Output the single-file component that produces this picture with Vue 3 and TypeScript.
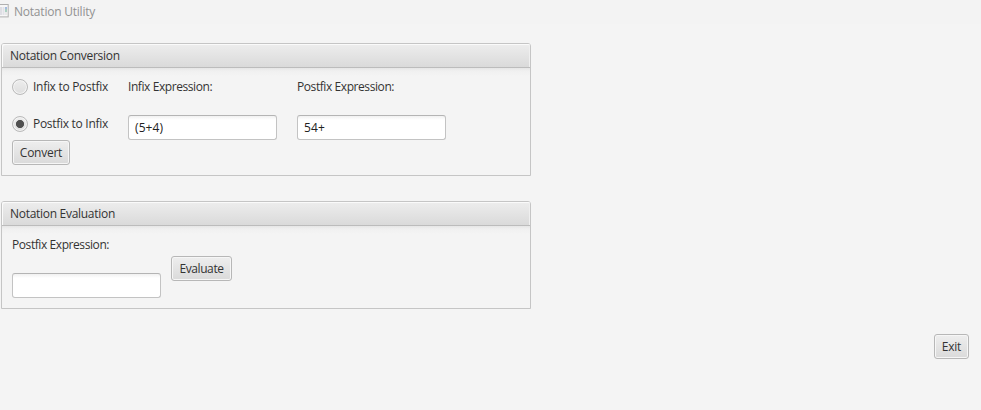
<script setup lang="ts">
import { ref } from 'vue'

type Mode = 'toPostfix' | 'toInfix'

const mode = ref<Mode>('toInfix')
const infix = ref<string>('(5+4)')
const postfix = ref<string>('54+')
const evaluation = ref<string>('')
</script>

<template>
  <div class="window">
    <header class="titlebar">
      <svg class="app-icon" width="9" height="14" viewBox="0 0 9 14">
        <rect x="-4" y="0.5" width="12.2" height="12.4" fill="#f7f7f7" stroke="#b0b0b0" />
        <rect x="0" y="3" width="2" height="8" fill="#dedee4" />
        <rect x="2.5" y="3" width="2" height="8" fill="#e2e2e8" />
        <rect x="5" y="3" width="2" height="2" fill="#a3bbe0" />
        <rect x="5" y="5" width="2" height="3" fill="#a9cfc0" />
        <rect x="5" y="8" width="2" height="3" fill="#e8e8e8" />
      </svg>
      <span class="title">Notation Utility</span>
    </header>

    <section class="panel conversion">
      <h2 class="panel-title"><span>Notation Conversion</span></h2>
      <div class="panel-body">
        <div class="modes">
          <label class="option"><input v-model="mode" type="radio" value="toPostfix" /><span>Infix to Postfix</span></label>
          <label class="option"><input v-model="mode" type="radio" value="toInfix" /><span>Postfix to Infix</span></label>
          <button type="button" class="btn convert"><span>Convert</span></button>
        </div>
        <label class="field">
          <span>Infix Expression:</span>
          <input v-model="infix" type="text" />
        </label>
        <label class="field">
          <span>Postfix Expression:</span>
          <input v-model="postfix" type="text" />
        </label>
      </div>
    </section>

    <section class="panel evaluation">
      <h2 class="panel-title"><span>Notation Evaluation</span></h2>
      <div class="panel-body">
        <label class="field">
          <span>Postfix Expression:</span>
          <input v-model="evaluation" type="text" />
        </label>
        <button type="button" class="btn evaluate"><span>Evaluate</span></button>
      </div>
    </section>

    <footer class="actions">
      <button type="button" class="btn exit"><span>Exit</span></button>
    </footer>
  </div>
</template>

<style>
body {
  background: #f4f4f4;
}
</style>

<style scoped>
.window,
.window * {
  box-sizing: border-box;
}
.window {
  width: 981px;
  height: 410px;
  overflow: hidden;
  background: #f4f4f4;
  color: #333;
  font: 12px/16px "Segoe UI", "Open Sans", "Noto Sans", sans-serif;
  letter-spacing: -0.29px;
  white-space: nowrap;
}
.titlebar {
  display: flex;
  align-items: flex-start;
  height: 24px;
  padding-top: 4px;
  background: #f3f3f3;
  color: #929292;
  letter-spacing: -0.22px;
}
.app-icon {
  display: block;
  margin-right: 5px;
}
.panel {
  width: 530px;
  margin-left: 1px;
  border: 1px solid #c5c5c5;
  border-radius: 3px 3px 0 0;
}
.conversion {
  height: 133px;
  margin-top: 19px;
}
.evaluation {
  height: 108px;
  margin-top: 25px;
}
.panel-title {
  height: 24px;
  margin: 0;
  padding: 4px 8px 0;
  border-bottom: 1px solid #bcbcbc;
  border-radius: 2px 2px 0 0;
  background: linear-gradient(#ededed, #dadada);
  box-shadow: inset 1px 1px 0 #fafafa, inset -1px 0 0 #efefef;
  font: inherit;
}
.panel-body {
  display: flex;
  height: calc(100% - 24px);
  padding: 11px 10px 0;
  background: linear-gradient(#e6e6e6, #f0f0f0 3px, #f4f4f4 8px);
}
.modes {
  display: flex;
  flex-direction: column;
  align-items: flex-start;
  width: 116px;
}
.option {
  display: flex;
  height: 16px;
  align-items: center;
  gap: 5px;
}
.option + .option {
  margin-top: 21px;
}
.option input {
  appearance: none;
  width: 16px;
  height: 16px;
  margin: 0;
  border: 1px solid #bababa;
  border-radius: 50%;
  background: linear-gradient(#ededed, #dedede);
  box-shadow: inset 0 0 0 1px #f5f5f5;
}
.option input:checked {
  background: radial-gradient(circle, #505050 3.7px, transparent 4.4px), linear-gradient(#ededed, #dedede);
}
.field {
  display: flex;
  flex-direction: column;
  gap: 20px;
  width: 169px;
  letter-spacing: -0.42px;
}
.field input {
  width: 149px;
  height: 25px;
  padding: 0 6px;
  border: 1px solid #c3c3c3;
  border-top-color: #b4b4b4;
  border-radius: 3px;
  outline: none;
  background: linear-gradient(#f1f1f1, #fff 4px);
  color: #222;
  font: inherit;
  letter-spacing: 0.1px;
}
.btn {
  height: 25px;
  padding: 0;
  border: 1px solid #b7b7b7;
  border-radius: 3px;
  background: linear-gradient(#eee, #dadada);
  box-shadow: inset 0 0 0 1px #f6f6f6;
  color: #333;
  font: inherit;
  letter-spacing: -0.25px;
}
.convert {
  width: 58px;
  margin-top: 8px;
}
.evaluation .field {
  width: 159px;
}
.evaluate {
  width: 61px;
  margin-top: 19px;
  letter-spacing: -0.4px;
}
.actions {
  display: flex;
  justify-content: flex-end;
  padding: 25px 12px 0 0;
}
.exit {
  width: 35px;
}
</style>
